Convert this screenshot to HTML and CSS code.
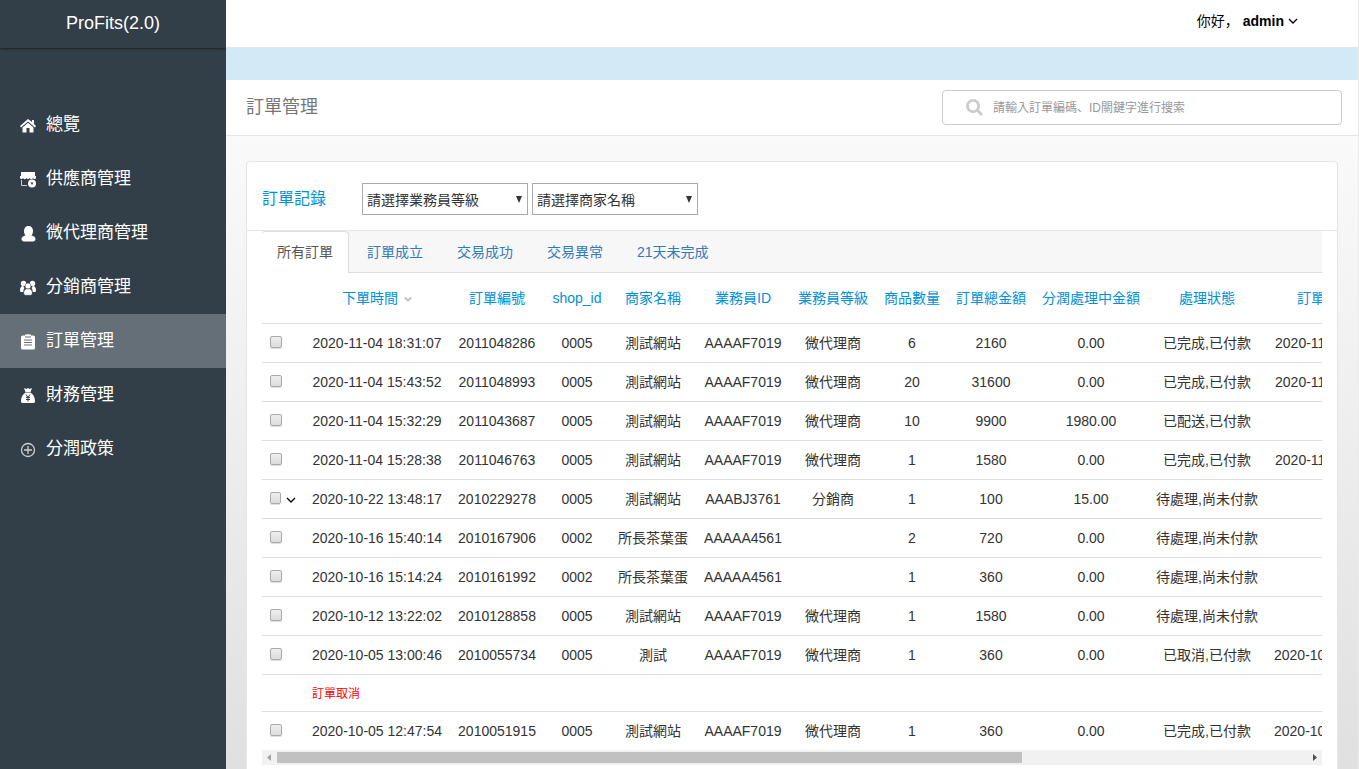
FILE: index.html
```html
<!DOCTYPE html>
<html lang="en">
<head>
<meta charset="UTF-8" />
<meta name="viewport" content="width=device-width, initial-scale=1.0" />
<title>訂單管理 - ProFits</title>
<link rel="stylesheet" href="styles.css">
</head>
<body>
  <aside class="sidebar">
    <div class="brand">ProFits(2.0)</div>
    <nav class="menu">
      <a href="#">
        <svg viewBox="0 0 16 16"><path d="M8 1 0 8l1 1.500 7-6 7 6 1-1.500-2-2V2h-2v2z"/><path d="M8 4.800 2.500 9.500v5h4V10h3v4.500h4v-5z"/></svg>
        總覽
      </a>
      <a href="#">
        <svg viewBox="0 0 16 16"><path d="M1 0h14v5H1z"/><path d="M0 4h16v1.500c0 2-2.500 2-3 .5-.5 1.500-3 1.500-3.500 0-.5 1.500-2.500 1.500-3 0-.5 1.500-3 1.500-3.500 0C2.500 7.500 0 7.500 0 5.500z"/><path d="M1.500 8v5.500H7" fill="none" stroke="#ccd0d3"/><circle cx="12" cy="11.500" r="4"/><path d="M10.500 10.500 12 13l1.500-2.500z" fill="#333f48"/></svg>
        供應商管理
      </a>
      <a href="#">
        <svg viewBox="0 0 16 16"><path d="M8.500 0C11.500 0 13 2 13 5c0 2-.8 3.500-1.500 4.500 2.500.6 4 1.500 4 3.500 0 1.500-1 2.500-2.500 2.500H4c-1.500 0-2.500-1-2.500-2.500 0-2 1.500-2.900 4-3.500C4.800 8.500 4 7 4 5c0-3 1.500-5 4.500-5z"/></svg>
        微代理商管理
      </a>
      <a href="#">
        <svg viewBox="0 0 16 16"><circle cx="3.500" cy="3.500" r="2.700"/><circle cx="12.500" cy="3.500" r="2.700"/><path d="M0 10c0-2 1-4 3-4l1.500 2C3.500 9 3.500 10 3.500 12H1c-1 0-1-1-1-2zM16 10c0-2-1-4-3-4l-1.500 2c1 1 1 2 1 4H15c1 0 1-1 1-2z"/><g stroke="#333f48" stroke-width=".6"><path d="M8 8.500c3 0 4.300 2 4.300 4.500 0 1.500-.8 2.300-2 2.300H5.700c-1.200 0-2-.8-2-2.300 0-2.500 1.300-4.500 4.300-4.500z"/><circle cx="8" cy="6" r="3"/></g></svg>
        分銷商管理
      </a>
      <a href="#" class="active">
        <svg viewBox="0 0 16 16"><path d="M2.500 1.500H5V.5h2q1-1 2 0h2v1h2.500q1.500 0 1.500 1.500v11q0 1.500-1.500 1.500h-11Q1 15.500 1 14V3q0-1.500 1.500-1.500z"/><path d="M5 3h6M4 6h8M4 8.500h8M4 11h8" stroke="#656f77" fill="none"/></svg>
        訂單管理
      </a>
      <a href="#">
        <svg viewBox="0 0 16 16"><path d="m4 0 2.500 1L8 0l1.500 1L12 0l-1.500 4h-5zM5.500 4.500h5C13 6 15 9 15 13c0 1.500-.5 2-2 2H3c-1.500 0-2-.5-2-2 0-4 2-7 4.500-8.500z"/><path d="m6 6.500 2 3 2-3M6 9.500h4M6 11.500h4M8 9.500v4" stroke="#333f48" fill="none"/></svg>
        財務管理
      </a>
      <a href="#">
        <svg viewBox="0 0 16 16" class="line"><circle cx="8" cy="8" r="6.500"/><path d="M8 4v8M4 8h8"/></svg>
        分潤政策
      </a>
    </nav>
  </aside>

  <div class="page">
    <header class="topbar">
      <span>你好，</span>
      <button class="user">admin<svg viewBox="0 0 10 6"><path d="m1 1 4 4 4-4"/></svg></button>
    </header>
    <div class="notice"></div>
    <div class="titlebar">
      <h1>訂單管理</h1>
      <label class="search">
        <svg viewBox="0 0 18 18"><circle cx="7.500" cy="7.500" r="6"/><path d="m12 12 5 5"/></svg>
        <input type="text" aria-label="搜索" placeholder="請輸入訂單編碼、ID關鍵字進行搜索">
      </label>
    </div>

    <main class="content">
      <section class="card">
        <div class="card-head">
          <h2>訂單記錄</h2>
          <select aria-label="業務員等級"><option>請選擇業務員等級</option></select>
          <select aria-label="商家名稱"><option>請選擇商家名稱</option></select>
        </div>
        <div class="card-body">
          <nav class="tabs">
            <a href="#" class="active">所有訂單</a>
            <a href="#">訂單成立</a>
            <a href="#">交易成功</a>
            <a href="#">交易異常</a>
            <a href="#">21天未完成</a>
          </nav>
          <div class="table-wrap">
            <table>
              <colgroup>
                <col class="c-check"><col class="c-time"><col class="c-no"><col class="c-shop"><col class="c-name"><col class="c-no"><col class="c-name"><col class="c-count"><col class="c-name"><col class="c-profit"><col class="c-status"><col class="c-time"><col class="c-more">
              </colgroup>
              <thead>
                <tr>
                  <th></th>
                  <th>下單時間<svg class="sort" viewBox="0 0 10 6"><path d="m1 1 4 4 4-4"/></svg></th>
                  <th>訂單編號</th><th>shop_id</th><th>商家名稱</th><th>業務員ID</th><th>業務員等級</th><th>商品數量</th><th>訂單總金額</th><th>分潤處理中金額</th><th>處理狀態</th><th>訂單完成時間</th><th></th>
                </tr>
              </thead>
              <tbody id="orders"></tbody>
            </table>
          </div>
          <div class="scrollbar">
            <svg viewBox="0 0 15 15"><path d="M9 4v7L5 7.500z" fill="#a3a3a3"/></svg>
            <div class="track"><div class="thumb"></div></div>
            <svg viewBox="0 0 15 15"><path d="M6 4v7l4-3.500z" fill="#505050"/></svg>
          </div>
        </div>
      </section>
    </main>
  </div>

  <script>
    const orders = [
      ['2020-11-04 18:31:07', '2011048286', '0005', '測試網站', 'AAAAF7019', '微代理商', '6', '2160', '0.00', '已完成,已付款', '2020-11-11 18:31:07'],
      ['2020-11-04 15:43:52', '2011048993', '0005', '測試網站', 'AAAAF7019', '微代理商', '20', '31600', '0.00', '已完成,已付款', '2020-11-11 15:43:52'],
      ['2020-11-04 15:32:29', '2011043687', '0005', '測試網站', 'AAAAF7019', '微代理商', '10', '9900', '1980.00', '已配送,已付款', ''],
      ['2020-11-04 15:28:38', '2011046763', '0005', '測試網站', 'AAAAF7019', '微代理商', '1', '1580', '0.00', '已完成,已付款', '2020-11-11 15:28:38'],
      ['2020-10-22 13:48:17', '2010229278', '0005', '測試網站', 'AAABJ3761', '分銷商', '1', '100', '15.00', '待處理,尚未付款', ''],
      ['2020-10-16 15:40:14', '2010167906', '0002', '所長茶葉蛋', 'AAAAA4561', '', '2', '720', '0.00', '待處理,尚未付款', ''],
      ['2020-10-16 15:14:24', '2010161992', '0002', '所長茶葉蛋', 'AAAAA4561', '', '1', '360', '0.00', '待處理,尚未付款', ''],
      ['2020-10-12 13:22:02', '2010128858', '0005', '測試網站', 'AAAAF7019', '微代理商', '1', '1580', '0.00', '待處理,尚未付款', ''],
      ['2020-10-05 13:00:46', '2010055734', '0005', '測試', 'AAAAF7019', '微代理商', '1', '360', '0.00', '已取消,已付款', '2020-10-05 13:00:46'],
      ['2020-10-05 12:47:54', '2010051915', '0005', '測試網站', 'AAAAF7019', '微代理商', '1', '360', '0.00', '已完成,已付款', '2020-10-05 12:47:54']
    ];
    const arrow = '<svg class="expand" viewBox="0 0 10 6"><path d="m1 1 4 4 4-4"/></svg>';

    document.getElementById('orders').innerHTML = orders.map(order => {
      const expand = order[5] === '分銷商' ? arrow : '';
      let row = '<tr><td><div class="check"><input type="checkbox" aria-label="' + order[1] + '">' + expand + '</div></td>'
        + order.map(v => '<td>' + v + '</td>').join('') + '<td></td></tr>';
      if (order[9].startsWith('已取消')) {
        row += '<tr class="note"><td></td><td colspan="12">訂單取消</td></tr>';
      }
      return row;
    }).join('');

    // keep the custom scrollbar in step with the table
    const wrap = document.querySelector('.table-wrap');
    const thumb = document.querySelector('.thumb');
    function updateThumb() {
      thumb.style.width = wrap.clientWidth / wrap.scrollWidth * 100 + '%';
      thumb.style.marginLeft = wrap.scrollLeft / wrap.scrollWidth * 100 + '%';
    }
    wrap.addEventListener('scroll', updateThumb);
    window.addEventListener('resize', updateThumb);
    updateThumb();
  </script>
</body>
</html>
```
FILE: styles.css
```css
* {
  box-sizing: border-box;
}
body {
  display: flex;
  height: 100vh;
  margin: 0;
  overflow: hidden;
  font: 14px/20px "Liberation Sans", "Noto Sans CJK JP", sans-serif;
  color: #333;
}
a {
  text-decoration: none;
}
h1, h2 {
  margin: 0;
  font-weight: normal;
}

/* sidebar */
.sidebar {
  flex: none;
  width: 226px;
  overflow: hidden;
  background: #333f48;
  color: #fff;
}
.brand {
  height: 48px;
  line-height: 46px;
  font-size: 18px;
  text-align: center;
  box-shadow: 0 0 3px rgba(0, 0, 0, 0.9);
}
.menu {
  padding-top: 50px;
}
.menu a {
  display: flex;
  align-items: center;
  gap: 10px;
  height: 54px;
  padding: 0 20px;
  font-size: 17px;
  color: #fff;
}
.menu a.active {
  background: #656f77;
}
.menu svg {
  width: 16px;
  height: 16px;
  margin-top: 2px;
  fill: #fff;
}
.menu svg.line {
  fill: none;
  stroke: #ccd0d3;
  stroke-width: 1.3;
}

/* top area */
.page {
  flex: 1;
  min-width: 0;
  display: flex;
  flex-direction: column;
  border-right: 1px solid #eaeaea;
}
.topbar {
  display: flex;
  flex: none;
  justify-content: flex-end;
  gap: 4px;
  height: 48px;
  padding: 11px 60px 0;
  border-bottom: 1px solid #e5e5e5;
  color: #000;
}
.user {
  display: flex;
  align-items: center;
  gap: 4px;
  height: 20px;
  padding: 0;
  border: 0;
  background: none;
  font: inherit;
  font-weight: bold;
  color: #000;
}
.user svg, .expand, .sort {
  width: 10px;
  height: 6px;
  fill: none;
  stroke: #000;
  stroke-width: 1.3;
}
.notice {
  flex: none;
  height: 32px;
  background: #d4e9f6;
}
.titlebar {
  display: flex;
  flex: none;
  align-items: center;
  justify-content: space-between;
  height: 56px;
  padding: 0 16px 0 20px;
  border-bottom: 1px solid #e5e5e5;
}
.titlebar h1 {
  padding-bottom: 2px;
  font-size: 18px;
  color: #777;
}
.search {
  display: flex;
  align-items: center;
  gap: 10px;
  width: 400px;
  height: 35px;
  padding: 0 23px;
  border: 1px solid #ccc;
  border-radius: 4px;
}
.search svg {
  width: 17px;
  height: 17px;
  fill: none;
  stroke: #ccc;
  stroke-width: 3;
}
.search input {
  flex: 1;
  padding: 0;
  border: 0;
  outline: 0;
  font: inherit;
  font-size: 12px;
}
.search input::placeholder {
  color: #999;
}

/* order card */
.content {
  flex: 1;
  min-height: 0;
  padding: 25px 20px 0;
  background: linear-gradient(#fafafa, #e0e0e0);
}
.card {
  padding-bottom: 15px;
  border: 1px solid #e5e5e5;
  border-radius: 4px;
  background: #fff;
}
.card-head {
  display: flex;
  align-items: center;
  gap: 4px;
  height: 69px;
  padding: 6px 15px 0;
  border-bottom: 1px solid #e5e5e5;
}
.card-head h2 {
  width: 96px;
  font-size: 16px;
  color: #0090d9;
}
.card-head select {
  width: 166px;
  height: 32px;
  padding: 2px 4px 0;
  border: 1px solid #a9a9a9;
  border-radius: 0;
  appearance: none;
  background: #fff url("data:image/svg+xml,%3Csvg xmlns='http://www.w3.org/2000/svg' width='6' height='7'%3E%3Cpath d='M0 0h6L3 7z' fill='%23333'/%3E%3C/svg%3E") no-repeat right 5px top 12px;
  font: inherit;
  color: #333;
}
.card-body {
  padding: 0 15px;
}
.tabs {
  display: flex;
  gap: 2px;
  border-bottom: 1px solid #ddd;
  background: #f7f7f7;
}
.tabs a {
  padding: 10px 15px;
  border: 1px solid transparent;
  border-bottom: 0;
  border-radius: 4px 4px 0 0;
  color: #337ab7;
}
.tabs a.active {
  margin-bottom: -1px;
  border-color: #ddd;
  border-left: 0;
  background: #fff;
  color: #555;
}

/* table */
.table-wrap {
  overflow-x: auto;
  scrollbar-width: none;
}
table {
  width: 1465px;
  table-layout: fixed;
  border-collapse: separate;
  border-spacing: 0;
  white-space: nowrap;
}
.c-check { width: 42px; }
.c-time { width: 146px; }
.c-no { width: 94px; }
.c-shop { width: 66px; }
.c-name { width: 86px; }
.c-count { width: 72px; }
.c-profit { width: 114px; }
.c-status { width: 118px; }
th, td {
  padding: 9px 8px;
  text-align: center;
}
th {
  height: 50px;
  font-weight: normal;
  color: #0090d9;
}
td {
  height: 39px;
  border-top: 1px solid #ddd;
}
.check {
  display: flex;
  align-items: center;
  gap: 5px;
}
.check input {
  width: 12px;
  height: 12px;
  margin: 0 0 2px;
  appearance: none;
  border: 1px solid #aaa;
  border-radius: 2px;
  background: linear-gradient(#eee, #dcdcdc);
  box-shadow: 0 1px 1px #ddd;
}
.expand {
  flex: none;
  margin-top: 2px;
}
.sort {
  width: 8px;
  margin: 0 0 1px 6px;
  stroke: #bbb;
  stroke-width: 2;
}
.note td {
  height: 37px;
  padding: 9px 8px 7px;
  font-size: 12px;
  text-align: left;
  color: #f00;
}
.scrollbar {
  display: flex;
  height: 15px;
  background: #f1f1f1;
}
.scrollbar svg {
  flex: none;
  width: 15px;
}
.track {
  flex: 1;
  padding: 2px 0;
}
.thumb {
  height: 11px;
  background: #c1c1c1;
}
```
